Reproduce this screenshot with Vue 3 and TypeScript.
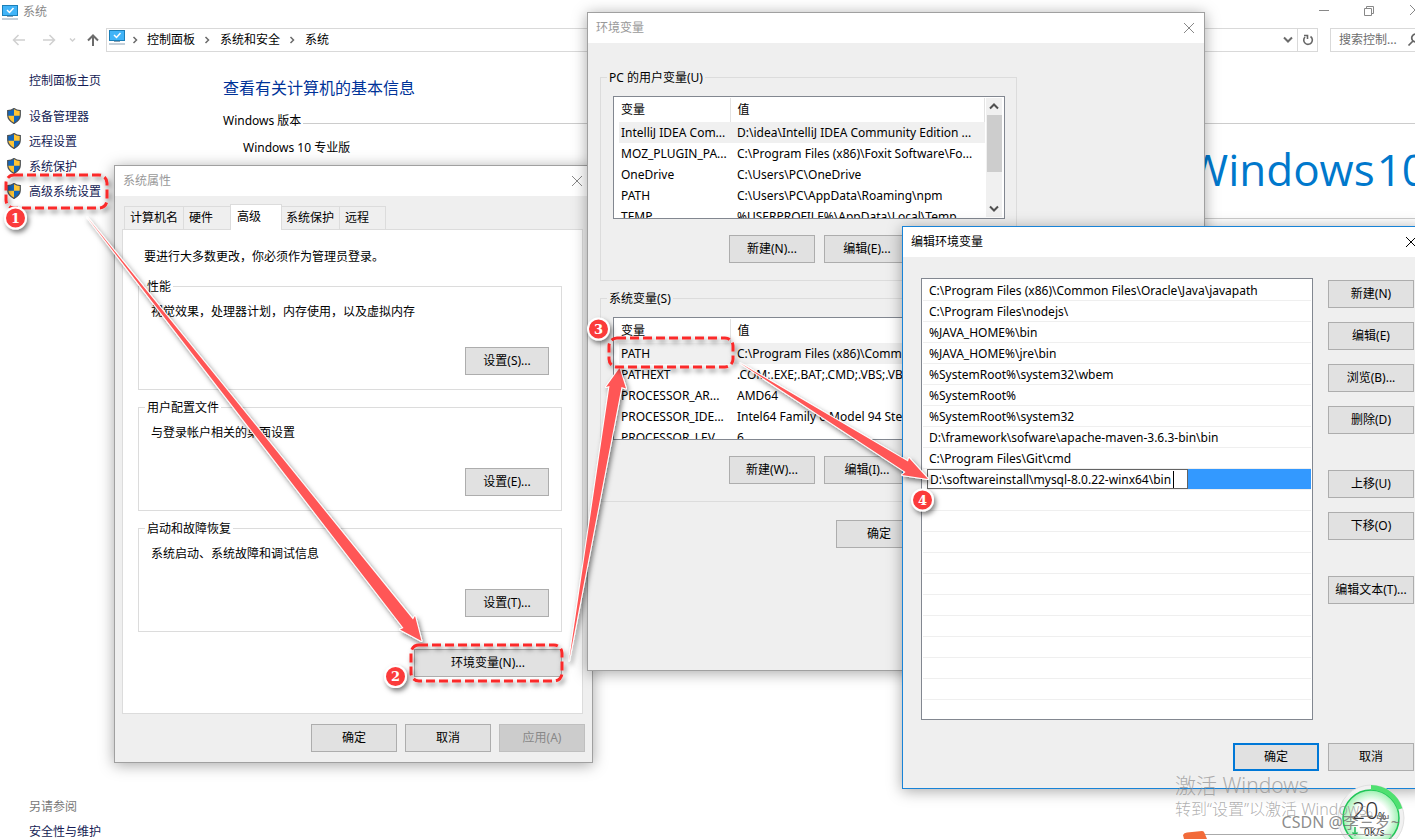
<script setup lang="ts">
interface Group { title: string; text: string; button: string }
const groups: Group[] = [
  { title: '性能', text: '视觉效果，处理器计划，内存使用，以及虚拟内存', button: '设置(S)...' },
  { title: '用户配置文件', text: '与登录帐户相关的桌面设置', button: '设置(E)...' },
  { title: '启动和故障恢复', text: '系统启动、系统故障和调试信息', button: '设置(T)...' },
]
const tabs: string[] = ['计算机名', '硬件', '高级', '系统保护', '远程']
const tasks: string[] = ['设备管理器', '远程设置', '系统保护', '高级系统设置']
const crumbs: string[] = ['控制面板', '系统和安全', '系统']

interface VarTable { title: string; rows: [string, string][]; add: string; edit: string }
const tables: VarTable[] = [
  {
    title: 'PC 的用户变量(U)', add: '新建(N)...', edit: '编辑(E)...',
    rows: [
      ['IntelliJ IDEA Com...', 'D:\\idea\\IntelliJ IDEA Community Edition ...'],
      ['MOZ_PLUGIN_PA...', 'C:\\Program Files (x86)\\Foxit Software\\Fo...'],
      ['OneDrive', 'C:\\Users\\PC\\OneDrive'],
      ['PATH', 'C:\\Users\\PC\\AppData\\Roaming\\npm'],
      ['TEMP', '%USERPROFILE%\\AppData\\Local\\Temp'],
    ],
  },
  {
    title: '系统变量(S)', add: '新建(W)...', edit: '编辑(I)...',
    rows: [
      ['PATH', 'C:\\Program Files (x86)\\Common Files\\O...'],
      ['PATHEXT', '.COM;.EXE;.BAT;.CMD;.VBS;.VBE;.JS;...'],
      ['PROCESSOR_AR...', 'AMD64'],
      ['PROCESSOR_IDE...', 'Intel64 Family 6 Model 94 Stepping 3...'],
      ['PROCESSOR_LEV...', '6'],
    ],
  },
]

const paths: string[] = [
  'C:\\Program Files (x86)\\Common Files\\Oracle\\Java\\javapath',
  'C:\\Program Files\\nodejs\\',
  '%JAVA_HOME%\\bin',
  '%JAVA_HOME%\\jre\\bin',
  '%SystemRoot%\\system32\\wbem',
  '%SystemRoot%',
  '%SystemRoot%\\system32',
  'D:\\framework\\sofware\\apache-maven-3.6.3-bin\\bin',
  'C:\\Program Files\\Git\\cmd',
]
const newPath = 'D:\\softwareinstall\\mysql-8.0.22-winx64\\bin'
const blanks = 10
</script>

<template>
  <div class="desktop">
    <main class="system">
      <header class="caption">
        <svg class="pc" viewBox="0 0 16 15"><rect width="16" height="11" fill="#1b7fb8" /><rect x="1" y="1" width="14" height="9" fill="#41b4f8" /><path d="M5 5l2.500 2.500L11.500 3" fill="none" stroke="#fff" stroke-width="1.500" /><path d="M5 11.500h6M0 14h16" stroke="#8ba2b5" stroke-width="1.200" /></svg>
        <span>系统</span>
        <svg class="winctl" viewBox="0 0 98 20" fill="none" stroke="#888"><path d="M2 10.500h10" /><path d="M47.500 8.500h7v7h-7zM49.500 8.500v-2h7v7h-2" /><path d="M93 5l10 10M93 15l10-10" /></svg>
      </header>
      <nav class="nav">
        <svg class="arrows" viewBox="0 0 106 24" fill="none"><path d="M25 12H14M18.500 7L13.500 12l5 5M43 12h11M49.500 7l5 5-5 5" stroke="#d0d0d0" stroke-width="1.500" /><path d="M70 10.500l2.500 2.500 2.500-2.500" stroke="#d0d0d0" stroke-width="1.500" /><path d="M93 18V8M88 12.500L93 7.500l5 5" stroke="#6b6b6b" stroke-width="2" /></svg>
        <div class="address">
          <svg class="pc" viewBox="0 0 16 15"><rect width="16" height="11" fill="#1b7fb8" /><rect x="1" y="1" width="14" height="9" fill="#41b4f8" /><path d="M5 5l2.500 2.500L11.500 3" fill="none" stroke="#fff" stroke-width="1.500" /><path d="M5 11.500h6M0 14h16" stroke="#8ba2b5" stroke-width="1.200" /></svg>
          <template v-for="c in crumbs" :key="c">
            <svg class="chev" viewBox="0 0 6 8"><path d="M1.500 1l3 3-3 3" fill="none" stroke="#6b6b6b" stroke-width="1.500" /></svg>
            <a href="#">{{ c }}</a>
          </template>
          <svg class="drop" viewBox="0 0 10 7"><path d="M1 1.500l4 4 4-4" fill="none" stroke="#6b6b6b" stroke-width="2" /></svg>
          <button class="refresh" aria-label="刷新"><svg viewBox="0 0 12 12" fill="none" stroke="#666" stroke-width="1.600"><path d="M8.500 2.500A4.300 4.300 0 1 1 3 3" /><path d="M2 1.500h3.500V5" /></svg></button>
        </div>
        <label class="search"><input type="text" placeholder="搜索控制..." aria-label="搜索控制面板"><svg viewBox="0 0 14 14" fill="none" stroke="#666" stroke-width="1.700"><circle cx="8.500" cy="5" r="3.800" /><path d="M6 8L1.500 12.500" /></svg></label>
      </nav>
      <div class="content">
        <aside>
          <a href="#" class="home">控制面板主页</a>
          <a v-for="t in tasks" :key="t" href="#" class="task">
            <svg viewBox="0 0 14 16"><path d="M7 .5C5 2 3 2.500.7 2.600V7c0 4 2.600 6.500 6.300 8.400C10.700 13.500 13.300 11 13.300 7V2.600C11 2.500 9 2 7 .5z" fill="#ffc534" /><path d="M7 .5C5 2 3 2.500.7 2.600V7.800H7zM7 7.800v7.600c3.700-1.900 6-4.100 6.300-7.600z" fill="#1166bd" /><path d="M7 .5C5 2 3 2.500.7 2.600V7c0 4 2.600 6.500 6.300 8.400C10.700 13.500 13.300 11 13.300 7V2.600C11 2.500 9 2 7 .5z" fill="none" stroke="#4c5157" stroke-width="1.200" /></svg>
            {{ t }}
          </a>
          <div class="also">另请参阅</div>
          <a href="#">安全性与维护</a>
        </aside>
        <section class="info">
          <h1>查看有关计算机的基本信息</h1>
          <h2>Windows 版本</h2>
          <p>Windows 10 专业版</p>
          <div class="brand">Windows<span>10</span></div>
        </section>
      </div>
    </main>

    <section class="dialog props" aria-label="系统属性">
      <header class="bar"><span>系统属性</span><button class="x" aria-label="关闭"><svg viewBox="0 0 12 12"><path d="M1 1l10 10M1 11L11 1" /></svg></button></header>
      <div class="tabs" role="tablist"><button v-for="(t, i) in tabs" :key="t" role="tab" :class="['t' + i, { on: i === 2 }]" :aria-selected="i === 2">{{ t }}</button></div>
      <div class="panel">
        <p>要进行大多数更改，你必须作为管理员登录。</p>
        <div v-for="g in groups" :key="g.title" class="group">
          <h3>{{ g.title }}</h3>
          <p>{{ g.text }}</p>
          <button class="btn">{{ g.button }}</button>
        </div>
        <button class="btn envbtn">环境变量(N)...</button>
      </div>
      <footer><button class="btn">确定</button><button class="btn">取消</button><button class="btn" disabled>应用(A)</button></footer>
    </section>

    <section class="dialog env" aria-label="环境变量">
      <header class="bar"><span>环境变量</span><button class="x" aria-label="关闭"><svg viewBox="0 0 12 12"><path d="M1 1l10 10M1 11L11 1" /></svg></button></header>
      <div v-for="v in tables" :key="v.title" class="group vars">
        <h3>{{ v.title }}</h3>
        <div class="listbox">
          <table>
            <thead><tr><th>变量</th><th>值</th></tr></thead>
            <tbody><tr v-for="(r, i) in v.rows" :key="i" :class="{ sel: i === 0 }"><td>{{ r[0] }}</td><td>{{ r[1] }}</td></tr></tbody>
          </table>
          <div class="scroll">
            <svg viewBox="0 0 10 7"><path d="M1 5.500l4-4 4 4" /></svg>
            <i></i>
            <svg viewBox="0 0 10 7"><path d="M1 1.500l4 4 4-4" /></svg>
          </div>
        </div>
        <div class="actions"><button class="btn">{{ v.add }}</button><button class="btn">{{ v.edit }}</button></div>
      </div>
      <button class="btn ok">确定</button>
    </section>

    <section class="dialog edit" aria-label="编辑环境变量">
      <header class="bar"><span>编辑环境变量</span><button class="x" aria-label="关闭"><svg viewBox="0 0 12 12"><path d="M1 1l10 10M1 11L11 1" /></svg></button></header>
      <div class="body">
        <ul>
          <li v-for="p in paths" :key="p">{{ p }}</li>
          <li class="active"><input type="text" :value="newPath" aria-label="路径"><i class="caret"></i></li>
          <li v-for="n in blanks" :key="n"></li>
        </ul>
        <div class="side">
          <button class="btn">新建(N)</button>
          <button class="btn">编辑(E)</button>
          <button class="btn">浏览(B)...</button>
          <button class="btn">删除(D)</button>
          <button class="btn gap">上移(U)</button>
          <button class="btn">下移(O)</button>
          <button class="btn gap">编辑文本(T)...</button>
        </div>
      </div>
      <footer><button class="btn primary">确定</button><button class="btn">取消</button></footer>
    </section>

    <svg class="meter" viewBox="0 0 80 60">
      <defs><radialGradient id="glow"><stop offset=".6" stop-color="#fff" /><stop offset="1" stop-color="#9df0b0" /></radialGradient></defs>
      <circle cx="40" cy="37" r="33" fill="#f1f1f1" stroke="#e0e0e0" />
      <circle cx="40" cy="37" r="28" fill="url(#glow)" stroke="#20c558" stroke-width="1.500" />
      <path d="M40 6.500A30.500 30.500 0 0 1 69 28" fill="none" stroke="#4fe070" stroke-width="5" />
      <text x="21" y="38" class="big">20</text><text x="47" y="39" class="small">%</text>
      <path d="M24 46v8M21.500 51.500l2.500 2.500 2.500-2.500" stroke="#1db954" stroke-width="1.500" fill="none" />
      <text x="33" y="55" class="small">0K/s</text>
    </svg>
    <div class="activate"><strong>激活 Windows</strong><span>转到“设置”以激活 Windows。</span></div>
    <svg class="corner" viewBox="0 0 220 8"><path d="M22 3.500H208V8" fill="none" stroke="#aaa" /><path d="M0 4Q1 2 4 1.600L19 0q2 0 2.500 2L24 8H1z" fill="#f26b3a" /></svg>
    <div class="credit">CSDN @李三岁~</div>

    <svg class="marks" viewBox="0 0 1415 839">
      <defs><filter id="sh" x="-20%" y="-20%" width="140%" height="150%"><feDropShadow dx="2" dy="3" stdDeviation="2.500" flood-color="#000" flood-opacity=".5" /></filter></defs>
      <g filter="url(#sh)">
        <g class="arrow">
          <path d="M87 217L413 619.500 415 616 421.500 641 400 629.500 403.500 628z" />
          <path d="M569 661L609.500 386 606 387 619.500 368 626 388.500 621.500 387z" />
          <path d="M740 363L908 461.500 909 458 928 479 902 475 905.500 472z" />
        </g>
      </g>
      <g class="dash" filter="url(#sh)">
        <rect x="6" y="175" width="101" height="33" rx="8" />
        <rect x="411" y="645" width="151" height="36" rx="8" />
        <rect x="609" y="338" width="124" height="29" rx="8" />
      </g>
      <g class="badge">
        <g filter="url(#sh)"><circle cx="15.500" cy="218" r="10.500" /><circle cx="395.500" cy="676.500" r="10.500" /><circle cx="598.500" cy="329" r="10.500" /><circle cx="922.500" cy="500" r="10.500" /></g>
        <text x="15.500" y="223">1</text><text x="395.500" y="681">2</text><text x="598.500" y="334">3</text><text x="922.500" y="505">4</text>
      </g>
    </svg>
  </div>
</template>

<style>
body { margin: 0; }
</style>

<style scoped>
* { box-sizing: border-box; }
.desktop { position: relative; height: 100vh; overflow: hidden; background: #fff; color: #000; font: 12px/16px "Noto Sans", "Noto Sans CJK SC", sans-serif; }
h1, h2, h3, p, ul { margin: 0; padding: 0; font-weight: 400; font-size: 12px; list-style: none; }
a { color: #151c55; text-decoration: none; }
button, input { font: inherit; padding: 0; margin: 0; color: inherit; }
svg { display: block; }

.caption { display: flex; align-items: center; gap: 5px; height: 24px; padding-left: 2px; color: #888; }
.pc { width: 16px; height: 15px; flex: none; }
.winctl { width: 98px; height: 20px; margin-left: auto; margin-bottom: 4px; }
.nav { display: flex; align-items: center; height: 31px; }
.arrows { width: 106px; height: 24px; flex: none; }
.address { flex: 1; display: flex; align-items: center; height: 24px; border: 1px solid #d9d9d9; padding-left: 2px; }
.address a { color: #000; }
.address .pc { margin-bottom: 4px; }
.chev { width: 6px; height: 8px; margin: 0 10px 0 9px; }
.address .pc + .chev { margin: 0 9px 0 7px; }
.address .drop { width: 10px; height: 7px; margin-left: auto; margin-right: 4px; }
.refresh { width: 20px; height: 22px; border: 0; border-left: 1px solid #d9d9d9; background: none; display: grid; place-items: center; }
.refresh svg { width: 12px; height: 12px; }
.search { display: flex; align-items: center; width: 85px; height: 24px; margin-left: 12px; border: 1px solid #d9d9d9; border-right: 0; padding-left: 8px; overflow: hidden; }
.search input { width: 68px; flex: none; border: 0; background: none; }
.search input::placeholder { color: #6d6d6d; opacity: 1; }
.search svg { width: 14px; height: 14px; flex: none; }
.content { display: flex; height: calc(100vh - 54px); }
aside { width: 223px; padding: 18px 0 0 29px; display: flex; flex-direction: column; flex: none; }
.home { margin-bottom: 15px; }
.task { display: flex; align-items: center; gap: 8px; height: 25px; margin-left: -22px; }
.task svg { width: 14px; height: 16px; margin-bottom: 2px; flex: none; }
.also { margin-top: auto; margin-bottom: 9px; color: #777; }
.info { flex: 1; min-width: 0; padding-top: 21px; }
.info h1 { font-size: 16px; line-height: 24px; color: #039; margin-bottom: 13px; }
.info h2 { display: flex; gap: 2px; }
.info h2::after { content: ""; flex: 1; border-top: 1px solid #ccc; margin-top: 10px; }
.info p { margin: 11px 0 0 20px; }
.brand { margin: -33px -12px 0 0; height: 96px; border-bottom: 1px solid #ccc; padding-top: 14px; display: flex; justify-content: flex-end; gap: 2px; font: 400 44px/64px "Open Sans", sans-serif; color: #0078cc; }

.dialog { position: absolute; background: #efefef; border: 1px solid #a0a0a0; box-shadow: 0 2px 14px rgba(0, 0, 0, .35); }
.bar { display: flex; align-items: center; justify-content: space-between; height: 30px; background: #fff; padding: 0 9px 0 8px; color: #999; }
.x { border: 0; background: none; }
.x svg { width: 12px; height: 12px; stroke: #888; }
.btn { width: 86px; height: 28px; border: 1px solid #adadad; background: #e1e1e1; color: #000; text-align: center; white-space: nowrap; line-height: 20px; }
.btn:disabled { background: #ccc; border-color: #bfbfbf; color: #888; }
.primary { border: 2px solid #0078d7; }

.props { left: 114px; top: 165px; width: 479px; padding-bottom: 10px; }
.tabs { display: flex; align-items: flex-end; height: 33px; margin: 0 0 0 9px; }
.tabs button { height: 23px; border: 1px solid #dcdcdc; border-bottom: 0; background: #efefef; text-align: left; padding-left: 5px; margin-right: -1px; white-space: nowrap; }
.tabs .t0 { width: 60px; }
.tabs .t1 { width: 48px; }
.tabs .on { position: relative; z-index: 1; width: 52px; height: 26px; margin-bottom: -1px; padding: 0 0 2px 6px; background: #fff; }
.tabs .t3 { width: 59px; padding-left: 4px; }
.tabs .t4 { width: 47px; }
.panel { display: flex; flex-direction: column; height: 485px; margin: 0 9px 0 7px; padding: 19px 20px 0 15px; background: #fff; border: 1px solid #dcdcdc; }
.panel > p { margin: 0 0 21px 6px; }
.group { position: relative; height: 104px; margin-bottom: 17px; border: 1px solid #dcdcdc; display: flex; flex-direction: column; }
.group h3 { align-self: flex-start; margin: -8px 0 0 6px; padding: 0 2px; background: #fff; }
.group p { margin: 9px 0 0 12px; }
.group .btn { width: 84px; }
.group > .btn { margin: auto 12px 14px auto; }
.panel .envbtn { width: 148px; margin-left: auto; }
.props footer { display: flex; justify-content: flex-end; gap: 8px; margin: 10px 7px 0 0; }

.env { left: 587px; top: 12px; width: 618px; height: 659px; }
.env .bar { margin-bottom: 34px; }
.vars { width: 417px; height: 204px; margin: 0 0 17px 12px; }
.vars h3 { background: #efefef; }
.listbox { display: flex; height: 123px; margin: 10px 11px 0 12px; border: 1px solid #828790; background: #fff; padding: 1px 2px 1px 5px; overflow: hidden; flex: none; }
table { flex: 1; height: max-content; border-collapse: collapse; table-layout: fixed; width: 366px; }
th, td { height: 21px; padding: 0 0 0 2px; text-align: left; font-weight: 400; white-space: nowrap; overflow: hidden; }
th { height: 24px; border-right: 1px solid #e2e2e2; }
th:first-child, td:first-child { width: 111px; }
td:last-child, th:last-child { padding-left: 7px; }
.sel td { background: #f0f0f0; }
.scroll { width: 16px; margin-left: 1px; background: #f0f0f0; display: flex; flex-direction: column; align-items: center; justify-content: space-between; padding: 5px 0; flex: none; }
.scroll svg { width: 10px; height: 7px; fill: none; stroke: #505050; stroke-width: 2; }
.scroll i { width: 15px; height: 57px; background: #cdcdcd; margin-bottom: 28px; }
.actions { display: flex; gap: 9px; margin: 16px 0 0 128px; }
.actions .btn { width: 86px; }
.ok { display: block; margin: 18px 0 0 248px; }

.edit { left: 902px; top: 226px; width: 522px; height: 563px; border-color: #1883d7; }
.edit .bar { color: #000; padding-right: 6px; }
.edit .x svg { stroke: #000; }
.body { display: flex; gap: 15px; padding: 21px 0 0 18px; }
.body ul { width: 392px; height: 442px; background: #fff; border: 1px solid #828790; padding: 1px; }
.body li { height: 21px; border-bottom: 1px solid #efefef; padding-left: 6px; line-height: 21px; }
.body .active { background: linear-gradient(#39f, #39f) content-box; padding-left: 4px; position: relative; }
.body input { display: block; width: 261px; height: 20px; border: 1px solid #646464; background: #fff; padding: 0 0 0 2px; }
.caret { position: absolute; left: 250px; top: 2px; width: 1px; height: 17px; background: #000; }
.side { display: flex; flex-direction: column; gap: 14px; padding-top: 2px; }
.side .gap { margin-top: 22px; }
.edit footer { display: flex; gap: 9px; margin: 23px 0 0 330px; }

.activate { position: absolute; right: 0; top: 772px; width: 240px; color: rgba(140, 140, 140, .7); white-space: nowrap; display: flex; flex-direction: column; }
.activate strong { font-size: 21px; line-height: 27px; font-weight: 300; }
.activate span { font-size: 16px; line-height: 20px; font-weight: 300; }
.meter { position: absolute; right: 4px; top: 781px; width: 80px; height: 60px; }
.meter .big { font-size: 23px; font-weight: 300; fill: #333; }
.meter .small { font-size: 10px; fill: #333; }
.corner { position: absolute; right: 12px; bottom: 0; width: 220px; height: 8px; }
.credit { position: absolute; right: 15px; top: 812px; font-size: 16px; line-height: 20px; color: rgba(110, 110, 110, .8); white-space: nowrap; }
.marks { position: absolute; left: 0; top: 0; width: 1415px; height: 839px; pointer-events: none; }
.arrow path { fill: #ff5656; stroke: #fff; stroke-width: 2; stroke-linejoin: round; paint-order: stroke; }
.dash rect { fill: none; stroke: #fb2b2b; stroke-width: 3; stroke-dasharray: 9 4; }
.badge circle { fill: #fb3b3b; stroke: #fff; stroke-width: 2; }
.badge text { fill: #fff; font: 700 13px "DejaVu Serif", serif; text-anchor: middle; }
</style>
